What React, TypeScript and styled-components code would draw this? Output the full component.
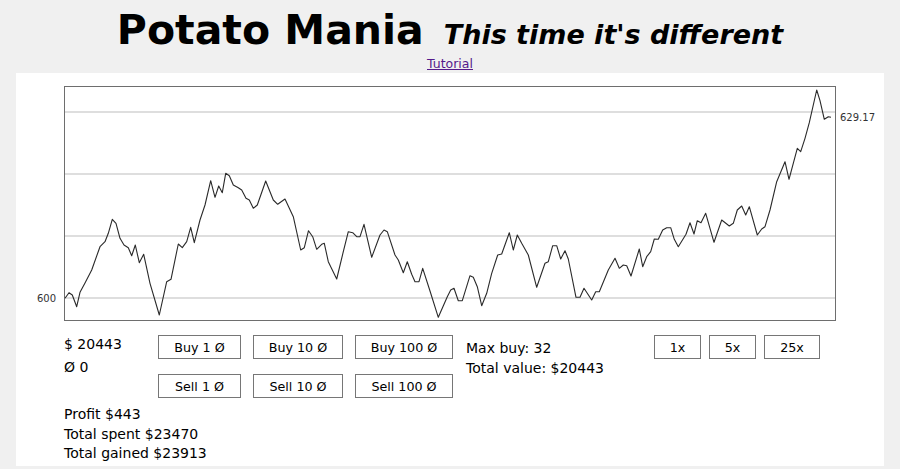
import React from 'react';
import styled, { createGlobalStyle } from 'styled-components';

const GlobalStyle = createGlobalStyle`
  body {
    margin: 0;
    background: #f0f0f0;
    font-family: "DejaVu Sans", Verdana, sans-serif;
    color: #000;
  }
`;

const Title = styled.h1`
  margin: 0;
  padding-top: 6px;
  font-size: 41px;
  font-weight: bold;
  line-height: normal;
  text-align: center;
`;

const Tagline = styled.span`
  margin-left: 20px;
  font-size: 27px;
  font-style: italic;
`;

const TutorialRow = styled.div`
  margin-top: 2px;
  text-align: center;
  font-size: 12.5px;
  line-height: normal;

  a {
    color: #551a8b;
  }
`;

const Panel = styled.main`
  margin: 2px 16px 0;
  padding-bottom: 2px;
  background: #fff;
`;

const Chart = styled.svg`
  display: block;
`;

const Controls = styled.div`
  display: flex;
  align-items: flex-start;
  margin-top: 10px;
  padding-left: 48px;
  font-size: 14px;
`;

const Wallet = styled.div`
  width: 94px;
  line-height: 23px;
`;

const TradeGrid = styled.div`
  display: grid;
  grid-template-columns: 83px 90px 98px;
  column-gap: 12px;
  row-gap: 15px;
  margin-top: 2px;
`;

const Button = styled.button<{ $w?: number }>`
  width: ${({ $w }) => ($w ? `${$w}px` : 'auto')};
  height: 24px;
  padding: 0;
  border: 1px solid #767676;
  background: #fff;
  color: #000;
  font-family: "DejaVu Sans", Verdana, sans-serif;
  font-size: 12.7px;
`;

const Info = styled.div`
  width: 188px;
  margin-left: 13px;
  padding-top: 5px;
  line-height: 20px;
`;

const SpeedBar = styled.div`
  display: flex;
  gap: 8px;
  margin-top: 2px;
`;

const Stats = styled.div`
  margin-top: 7px;
  padding-left: 48px;
  font-size: 14px;
  line-height: 19.5px;
`;

// price history, in page pixels
const history =
  '65,298.3 69,292.7 72.3,295 76.7,306.7 80,292.3 85,283 91.7,270 100,246.7 105,241.7 108.3,233.3 ' +
  '112.3,219.3 116,223.3 120,238.3 124,245 128.3,247.7 131.7,255.7 135.3,245 139.3,262.7 143.7,254.3 ' +
  '150,283.3 159.3,315 166.7,281.7 171,279.3 178.3,244 182.3,247.7 186.7,241.7 190.7,227.3 194.3,242.7 ' +
  '200,220 205,205 210.7,180.7 215,197.3 218.7,186 222.3,192.7 225.7,173.3 229.3,175.7 233.3,185 ' +
  '238.3,187.7 241.7,190 246,198.3 249.3,200 253.3,208.3 257.3,205 265.7,181 273.3,200 277.7,204.3 ' +
  '285,199 293.3,216.7 300.7,250 304.3,247.7 308.5,230.7 312.7,236.7 316.7,249.3 321.7,244.3 324.3,243.3 ' +
  '328.3,261.7 336.7,279 343.3,251.7 348.3,231.7 352.7,232.7 356.7,236.7 360,236.7 364,224.3 371.7,257.3 ' +
  '380,235 384,230 387.3,231.7 395,255 398.3,260 403.3,272.7 407.3,261.7 411.7,274.3 415,281.7 419,281.7 ' +
  '422.7,268.3 430,291 438.3,317.3 447.3,296.7 450.7,290 454,288.3 458.3,300.7 462.3,300.7 470,275.7 ' +
  '473.3,277.3 477.3,286.7 481.7,305.7 486.7,293.3 491.7,273.3 497.7,255 501.7,254 509.3,232.7 513.3,250 ' +
  '517.3,235 521.7,243.3 528.3,255 536.7,287.3 545,263.3 548.3,261.7 552.7,245.7 556.7,245.7 560.7,259 ' +
  '565,250.7 568.3,259 576,297.3 580,297.3 584,288.3 591.7,300 595.7,291.7 599.3,291.7 608.3,270 615,258.3 ' +
  '619.3,268.3 623.3,265 626.7,265.7 631,276 639.3,249 642.7,266.7 646.7,256.7 650.7,251.7 654.3,239 ' +
  '658.3,239.3 662.7,230 666.7,227.7 670.7,227.7 674.3,239.3 678.3,246.7 686,234.3 690,222.7 694,234 ' +
  '697.3,220.7 701,222.7 705.7,213.3 714,242.3 721.7,220 729.3,226 733.3,223.3 737.3,210 741.7,206 ' +
  '745.7,215 749.3,206.7 757.3,235 761.7,229 765,226.7 770,210 776.7,181.7 785,161.7 789,179.3 ' +
  '797.3,148.3 800.7,151.7 805,138.3 809.3,122.7 816.7,90 820,100.7 824.3,119.3 828.3,116.7 831,117.3';

const gridLines = [112, 174, 236, 298];

function PriceChart() {
  return (
    <Chart width={868} height={250} viewBox="16 73 868 250">
      {gridLines.map((y) => (
        <line key={y} x1={64} x2={836} y1={y} y2={y} stroke="#dedede" strokeWidth={2} />
      ))}
      <rect x={64.5} y={86.5} width={771} height={234} fill="none" stroke="#6e6e6e" strokeWidth={1} />
      <polyline points={history} fill="none" stroke="#2a2a2a" strokeWidth={1.1} strokeLinejoin="round" />
      <text x={56} y={301.5} textAnchor="end" fontFamily="DejaVu Sans" fontSize={10} fill="#333">
        600
      </text>
      <text x={840} y={120.5} fontFamily="DejaVu Sans" fontSize={10} fill="#333">
        629.17
      </text>
    </Chart>
  );
}

export default function App() {
  return (
    <>
      <GlobalStyle />
      <Title>
        Potato Mania<Tagline>This time it's different</Tagline>
      </Title>
      <TutorialRow>
        <a href="#tutorial">Tutorial</a>
      </TutorialRow>
      <Panel>
        <PriceChart />
        <Controls>
          <Wallet>
            <div>$ 20443</div>
            <div>Ø 0</div>
          </Wallet>
          <TradeGrid>
            <Button>Buy 1 Ø</Button>
            <Button>Buy 10 Ø</Button>
            <Button>Buy 100 Ø</Button>
            <Button>Sell 1 Ø</Button>
            <Button>Sell 10 Ø</Button>
            <Button>Sell 100 Ø</Button>
          </TradeGrid>
          <Info>
            <div>Max buy: 32</div>
            <div>Total value: $20443</div>
          </Info>
          <SpeedBar>
            <Button $w={47}>1x</Button>
            <Button $w={47}>5x</Button>
            <Button $w={56}>25x</Button>
          </SpeedBar>
        </Controls>
        <Stats>
          <div>Profit $443</div>
          <div>Total spent $23470</div>
          <div>Total gained $23913</div>
        </Stats>
      </Panel>
    </>
  );
}
